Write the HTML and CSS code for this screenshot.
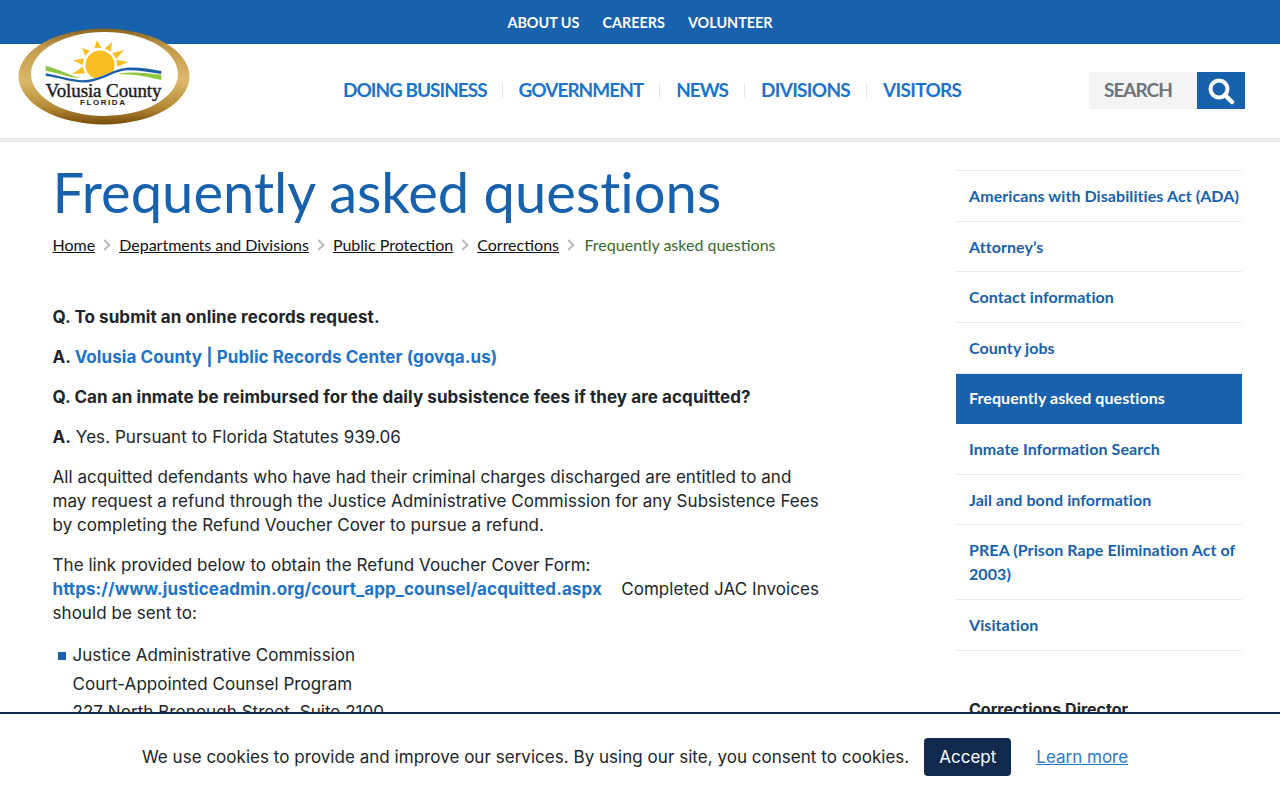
FILE: index.html
```html
<!DOCTYPE html>
<html lang="en">
<head>
<meta charset="utf-8">
<title>Frequently asked questions</title>
<link rel="stylesheet" href="styles.css">
</head>
<body>
<div class="topbar">
  <a href="#">ABOUT US</a><a href="#">CAREERS</a><a href="#">VOLUNTEER</a>
</div>
<header class="header">
  <a class="logo" href="#">
    <svg width="174" height="100" viewBox="0 0 174 100">
      <defs>
        <linearGradient id="gold" x1="0" y1="0" x2="0" y2="1">
          <stop offset="0" stop-color="#8a6420"/>
          <stop offset=".2" stop-color="#c39a4c"/>
          <stop offset=".55" stop-color="#dcb76a"/>
          <stop offset=".82" stop-color="#b58a36"/>
          <stop offset="1" stop-color="#764c0e"/>
        </linearGradient>
      </defs>
      <ellipse cx="86" cy="49.500" rx="85.500" ry="48" fill="url(#gold)"/>
      <ellipse cx="86.500" cy="47" rx="73.500" ry="42" fill="#fff"/>
      <g fill="#f9bf22">
        <circle cx="82" cy="38" r="14.500"/>
        <path d="M79 13L76.500 21L83.500 21z M94 15L86.700 21.400L92.900 24.600z M106 23L94.500 26L98.300 32z M110 35L98.500 32.800L99.300 39.800z M64 21L72 23.800L67.200 28.800z M55 33L65.900 31.500L64.700 38.300z M54 47L66.800 46.400L64.800 39.800z"/>
      </g>
      <path d="M27.700 46.300C42 49 56 54 68.700 53C84 51.500 96 41.500 108.700 40.700C120 40 132 42 143.300 44L143.300 60L27.700 60z" fill="#fff"/>
      <path d="M27.700 38.700C40 42 50 47.500 62 51.300C50 50 40 46 27.700 43.700z" fill="#8dc63f"/>
      <path d="M27.700 46.300C42 49 56 54 68.700 53C84 51.500 96 41.500 108.700 40.700C120 40 132 42 143.300 44L143.300 47C132 45 120 43 108.700 43.200C96 44 84 54 68.700 55.500C56 56 42 51 27.700 48.800z" fill="#1d5ea8"/>
      <path d="M100 47C112 44 128 46 143.300 47.800L143.300 53C128 49 114 47 100 47z" fill="#8dc63f"/>
      <text class="logo-name" x="27.500" y="70" textLength="116">Volusia County</text>
      <text class="logo-sub" x="62" y="78" textLength="45">FLORIDA</text>
    </svg>
  </a>
  <nav class="mainnav">
    <a href="#">DOING BUSINESS</a>
    <a href="#">GOVERNMENT</a>
    <a href="#">NEWS</a>
    <a href="#">DIVISIONS</a>
    <a href="#">VISITORS</a>
  </nav>
  <form class="search">
    <span class="search-label">SEARCH</span>
    <span class="search-btn">
      <svg width="28" height="28" viewBox="0 0 28 28"><circle cx="12" cy="12" r="8.500" fill="none" stroke="#fff" stroke-width="4"/><path d="M18 18l7 7" stroke="#fff" stroke-width="4.500" stroke-linecap="round"/></svg>
    </span>
  </form>
</header>
<div class="page">
  <main class="content">
    <h1>Frequently asked questions</h1>
    <ol class="crumbs">
      <li><a href="#">Home</a></li>
      <li><a href="#">Departments and Divisions</a></li>
      <li><a href="#">Public Protection</a></li>
      <li><a href="#">Corrections</a></li>
      <li class="current">Frequently asked questions</li>
    </ol>
    <div class="body">
      <p><strong>Q. To submit an online records request.</strong></p>
      <p><strong>A. <a href="#">Volusia County | Public Records Center (govqa.us)</a></strong></p>
      <p><strong>Q. Can an inmate be reimbursed for the daily subsistence fees if they are acquitted?</strong></p>
      <p><strong>A.</strong> Yes. Pursuant to Florida Statutes 939.06</p>
      <p>All acquitted defendants who have had their criminal charges discharged are entitled to and may request a refund through the Justice Administrative Commission for any Subsistence Fees by completing the Refund Voucher Cover to pursue a refund.</p>
      <p>The link provided below to obtain the Refund Voucher Cover Form: <strong><a href="#">https://www.justiceadmin.org/court_app_counsel/acquitted.aspx</a></strong> &nbsp;&nbsp; Completed JAC Invoices should be sent to:</p>
      <ul class="address">
        <li>Justice Administrative Commission<br>Court-Appointed Counsel Program<br>227 North Bronough Street, Suite 2100</li>
      </ul>
    </div>
  </main>
  <aside class="side">
    <ul class="sidenav">
      <li><a href="#">Americans with Disabilities Act (ADA)</a></li>
      <li><a href="#">Attorney’s</a></li>
      <li><a href="#">Contact information</a></li>
      <li><a href="#">County jobs</a></li>
      <li class="active"><a href="#">Frequently asked questions</a></li>
      <li><a href="#">Inmate Information Search</a></li>
      <li><a href="#">Jail and bond information</a></li>
      <li><a href="#">PREA (Prison Rape Elimination Act of 2003)</a></li>
      <li><a href="#">Visitation</a></li>
    </ul>
    <h3 class="side-title">Corrections Director</h3>
  </aside>
</div>
<div class="cookie">
  <span class="cookie-text">We use cookies to provide and improve our services. By using our site, you consent to cookies.</span>
  <button class="accept" type="button">Accept</button>
  <a class="learn" href="#">Learn more</a>
</div>
</body>
</html>
```
FILE: styles.css
```css
* { box-sizing: border-box; }
html, body { height: 100%; }
body {
  margin: 0;
  height: 800px;
  overflow: hidden;
  background: #fff;
  color: #212529;
  font-family: "Inter", "Liberation Sans", sans-serif;
  font-size: 17px;
  line-height: 24px;
}
a { text-decoration: none; }
.topbar {
  height: 44px;
  background: #1761ad;
  display: flex;
  justify-content: center;
  align-items: center;
  gap: 23px;
  padding-top: 1px;
  font-family: "Lato", sans-serif;
  font-weight: 700;
  font-size: 14.400px;
}
.topbar a { color: #fff; }
.header {
  position: relative;
  height: 98px;
  border-bottom: 4px solid #e9edf1;
  display: flex;
  align-items: flex-start;
  font-family: "Lato", sans-serif;
}
.logo {
  position: absolute;
  left: 18px;
  top: -17px;
  display: block;
  line-height: 0;
}
.logo-name { font-family: "Liberation Serif", serif; font-size: 19px; fill: #1c1c1c; stroke: #1c1c1c; stroke-width: .4px; }
.logo-sub { font-family: "Liberation Sans", sans-serif; font-size: 8px; font-weight: 700; fill: #1c1c1c; }
.mainnav {
  display: flex;
  margin-left: 343px;
  margin-top: 32px;
  font-size: 19px;
  font-weight: 700;
  line-height: 28px;
  letter-spacing: -1px;
}
.mainnav a { color: #1e73c9; padding-right: 16px; margin-right: 16px; position: relative; }
.mainnav a:nth-child(n+2) { padding-right: 17px; }
.mainnav a:nth-child(n+4) { letter-spacing: -.7px; }
.mainnav a:last-child { padding-right: 0; margin-right: 0; }
.mainnav a:not(:last-child)::after {
  content: "";
  position: absolute;
  right: 0;
  top: 7px;
  height: 15px;
  width: 1px;
  background: #e3e6e9;
}
.search {
  margin: 28px 35px 0 auto;
  display: flex;
  height: 37px;
}
.search-label {
  width: 108px;
  background: #f4f4f4;
  color: #6f757b;
  font-size: 19px;
  font-weight: 700;
  line-height: 36px;
  padding-left: 15px;
  letter-spacing: -1px;
}
.search-btn {
  width: 48px;
  background: #1761ad;
  display: flex;
  align-items: center;
  justify-content: center;
}
.page { display: flex; }
.content { width: 956px; padding-left: 52.500px; flex: none; }
h1 {
  margin: 19px 0 0;
  font-family: "Lato", sans-serif;
  font-weight: 400;
  font-size: 56.100px;
  line-height: 62px;
  color: #1761ad;
  font-variant-ligatures: none;
}
.crumbs {
  list-style: none;
  margin: 10px 0 0;
  padding: 0;
  display: flex;
  font-family: "Lato", sans-serif;
  font-size: 16px;
  line-height: 24px;
}
.crumbs li { display: flex; align-items: center; }
.crumbs a { color: #111; text-decoration: underline; }
.crumbs li:not(:last-child)::after {
  content: "";
  width: 6px;
  height: 6px;
  margin: 0 10px 0 6px;
  border-top: 2.500px solid #bbb;
  border-right: 2.500px solid #bbb;
  transform: rotate(45deg);
}
.crumbs .current { color: #3b6a2a; margin-left: 1.500px; }
.body { width: 770px; margin-top: 48px; letter-spacing: .05px; }
.body p { margin: 0 0 16px; }
.body strong { font-weight: 700; letter-spacing: .08px; }
.body a { color: #1e73c9; }
.address { list-style: none; margin: 0; padding: 0 0 0 20px; line-height: 28.500px; position: relative; }
.address li { position: relative; }
.address li::before {
  content: "";
  position: absolute;
  left: -15px;
  top: 11px;
  width: 8px;
  height: 8px;
  background: #1761ad;
}
.side { width: 286px; padding-top: 28.300px; flex: none; }
.sidenav {
  list-style: none;
  margin: 0;
  padding: 0;
  border-top: 1px solid #e9ecef;
  font-family: "Lato", sans-serif;
  font-weight: 700;
  font-size: 16px;
  line-height: 24px;
  letter-spacing: .08px;
}
.sidenav li { border-bottom: 1px solid #e9ecef; }
.sidenav a { display: block; padding: 12.800px 0 12.800px 13px; color: #1761ad; }
.sidenav .active { border-bottom-color: #1761ad; }
.sidenav .active a { background: #1761ad; color: #fff; }
.side-title {
  margin: 46.700px 0 0 13px;
  font-family: "Inter", sans-serif;
  font-size: 16px;
  font-weight: 700;
  line-height: 24px;
}
.cookie {
  position: fixed;
  left: 0;
  right: 0;
  bottom: 0;
  height: 88px;
  border-top: 2px solid #10294d;
  background: #fff;
  display: flex;
  align-items: center;
  justify-content: center;
  padding-right: 10px;
  font-size: 17px;
}
.cookie-text { letter-spacing: .03px; }
.accept {
  margin-left: 15px;
  width: 87px;
  height: 38px;
  border: 0;
  border-radius: 4px;
  background: #10294d;
  color: #fff;
  font-family: "Inter", sans-serif;
  font-size: 17px;
}
.learn { margin-left: 25px; color: #2f78c8; text-decoration: underline; font-size: 17px; }
```
